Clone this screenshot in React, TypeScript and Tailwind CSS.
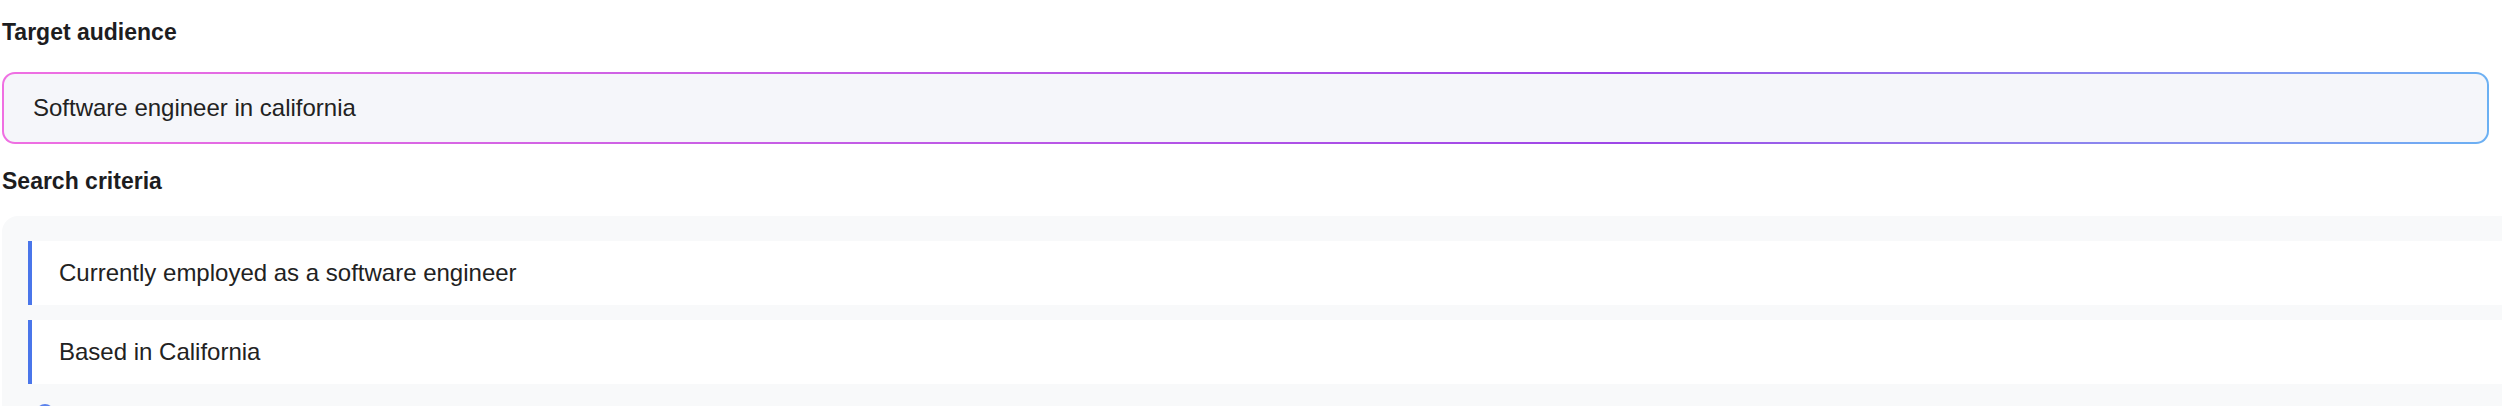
import { Plus } from "lucide-react";

const criteria = ["Currently employed as a software engineer", "Based in California"];

export default function App() {
  return (
    <div
      className="h-[406px] w-full overflow-hidden bg-white pl-[2px] text-[#1d1d1f]"
      style={{ fontFamily: '"Liberation Sans", Arial, sans-serif' }}
    >
      {/* Target audience */}
      <h2 className="pt-[16px] text-[23px] font-semibold leading-[32px]">Target audience</h2>
      <div className="mt-[24px] mr-[13px] rounded-[13px] bg-gradient-to-r from-[#ef6fe2] via-[#9e46e7] via-65% to-[#6bb0f3] p-[2px]">
        <div className="flex h-[68px] items-center rounded-[11px] bg-[#f5f6fa] pl-[29px] text-[24px] text-[#222]">
          Software engineer in california
        </div>
      </div>

      {/* Search criteria */}
      <h2 className="mt-[21px] text-[23px] font-semibold leading-[32px]">Search criteria</h2>
      <div className="mt-[19px] w-[calc(100%+40px)] rounded-[16px] bg-[#f8f9fa] pt-[25px] pl-[26px]">
        <div className="flex flex-col gap-[15px]">
          {criteria.map((c) => (
            <div
              key={c}
              className="flex h-[64px] items-center border-l-4 border-[#4a76ea] bg-white pl-[27px] text-[24px] text-[#222]"
            >
              {c}
            </div>
          ))}
        </div>
        <div className="flex items-center pt-[20px] pl-[8px]">
          <span className="flex h-[18px] w-[18px] items-center justify-center rounded-full border-2 border-[#5b82ec] text-[#5b82ec]">
            <Plus size={12} strokeWidth={2.5} />
          </span>
        </div>
      </div>
    </div>
  );
}
